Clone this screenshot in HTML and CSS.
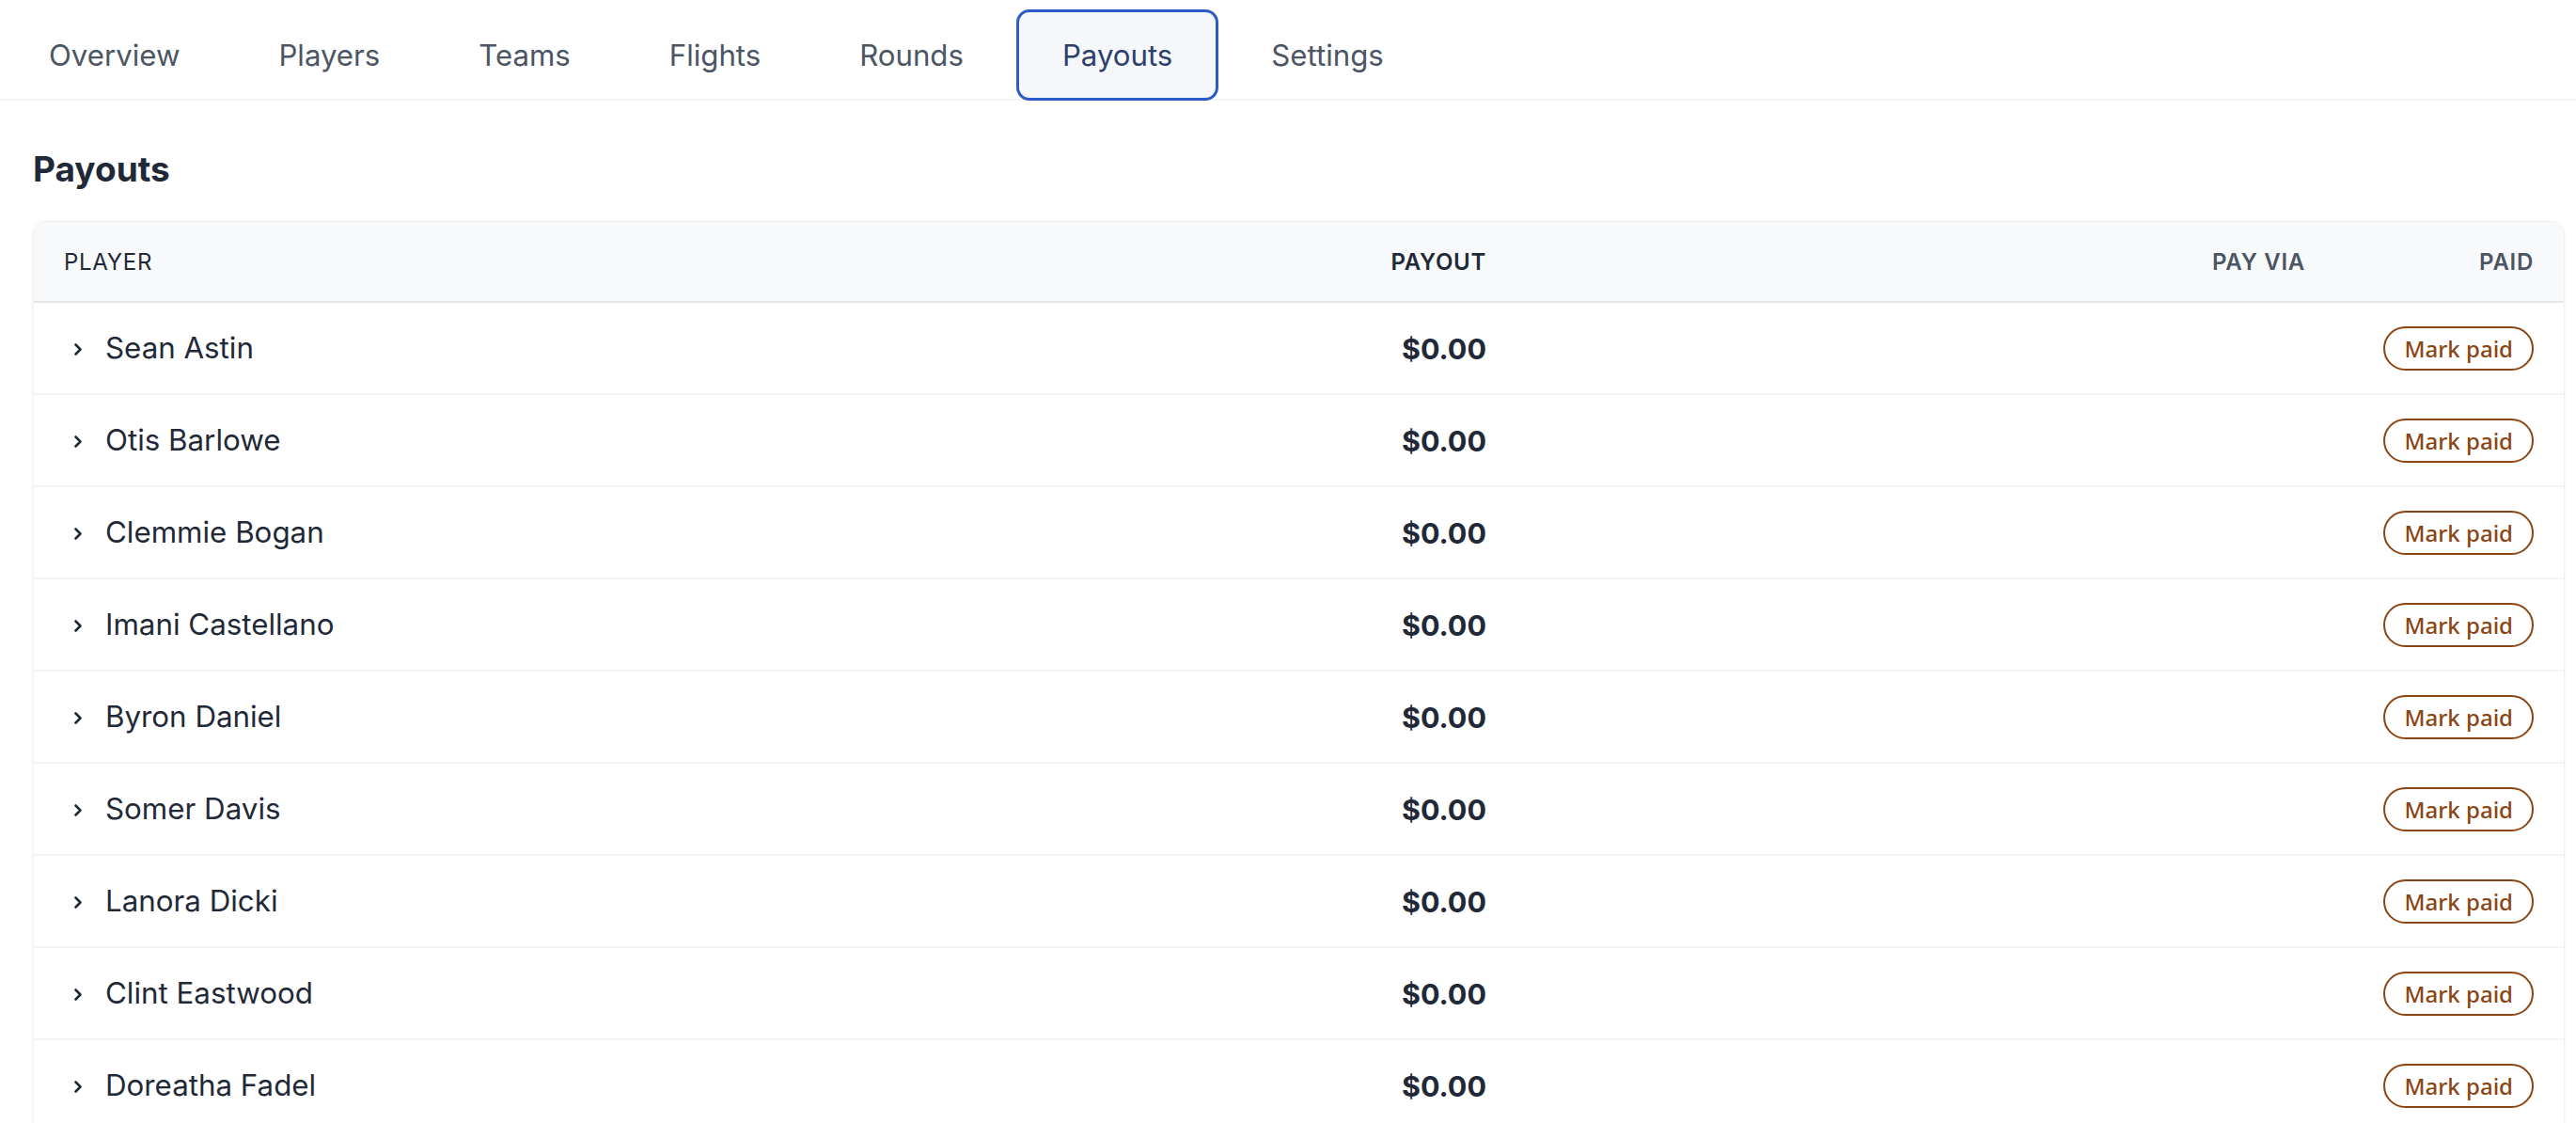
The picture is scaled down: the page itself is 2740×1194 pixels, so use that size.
FILE: index.html
```html
<!DOCTYPE html>
<html lang="en">
<head>
  <meta charset="UTF-8">
  <title>Payouts</title>
  <link rel="stylesheet" href="styles.css">
</head>
<body>
  <nav class="tabs">
    <a class="tab" href="#">Overview</a>
    <a class="tab" href="#">Players</a>
    <a class="tab" href="#">Teams</a>
    <a class="tab" href="#">Flights</a>
    <a class="tab" href="#">Rounds</a>
    <a class="tab active" href="#">Payouts</a>
    <a class="tab" href="#">Settings</a>
  </nav>

  <main class="page">
    <h1 class="page-title">Payouts</h1>

    <div class="card">
      <div class="row head">
        <div class="col-player">Player</div>
        <div class="col-payout">Payout</div>
        <div class="col-via">Pay via</div>
        <div class="col-paid">Paid</div>
      </div>

      <div class="row">
        <div class="col-player"><svg class="chev" viewBox="0 0 10 14"><polyline points="2.5,2 7.5,7 2.5,12"/></svg>Sean Astin</div>
        <div class="col-payout amount">$0.00</div>
        <div class="col-via"></div>
        <div class="col-paid"><button class="mark">Mark paid</button></div>
      </div>
      <div class="row">
        <div class="col-player"><svg class="chev" viewBox="0 0 10 14"><polyline points="2.5,2 7.5,7 2.5,12"/></svg>Otis Barlowe</div>
        <div class="col-payout amount">$0.00</div>
        <div class="col-via"></div>
        <div class="col-paid"><button class="mark">Mark paid</button></div>
      </div>
      <div class="row">
        <div class="col-player"><svg class="chev" viewBox="0 0 10 14"><polyline points="2.5,2 7.5,7 2.5,12"/></svg>Clemmie Bogan</div>
        <div class="col-payout amount">$0.00</div>
        <div class="col-via"></div>
        <div class="col-paid"><button class="mark">Mark paid</button></div>
      </div>
      <div class="row">
        <div class="col-player"><svg class="chev" viewBox="0 0 10 14"><polyline points="2.5,2 7.5,7 2.5,12"/></svg>Imani Castellano</div>
        <div class="col-payout amount">$0.00</div>
        <div class="col-via"></div>
        <div class="col-paid"><button class="mark">Mark paid</button></div>
      </div>
      <div class="row">
        <div class="col-player"><svg class="chev" viewBox="0 0 10 14"><polyline points="2.5,2 7.5,7 2.5,12"/></svg>Byron Daniel</div>
        <div class="col-payout amount">$0.00</div>
        <div class="col-via"></div>
        <div class="col-paid"><button class="mark">Mark paid</button></div>
      </div>
      <div class="row">
        <div class="col-player"><svg class="chev" viewBox="0 0 10 14"><polyline points="2.5,2 7.5,7 2.5,12"/></svg>Somer Davis</div>
        <div class="col-payout amount">$0.00</div>
        <div class="col-via"></div>
        <div class="col-paid"><button class="mark">Mark paid</button></div>
      </div>
      <div class="row">
        <div class="col-player"><svg class="chev" viewBox="0 0 10 14"><polyline points="2.5,2 7.5,7 2.5,12"/></svg>Lanora Dicki</div>
        <div class="col-payout amount">$0.00</div>
        <div class="col-via"></div>
        <div class="col-paid"><button class="mark">Mark paid</button></div>
      </div>
      <div class="row">
        <div class="col-player"><svg class="chev" viewBox="0 0 10 14"><polyline points="2.5,2 7.5,7 2.5,12"/></svg>Clint Eastwood</div>
        <div class="col-payout amount">$0.00</div>
        <div class="col-via"></div>
        <div class="col-paid"><button class="mark">Mark paid</button></div>
      </div>
      <div class="row">
        <div class="col-player"><svg class="chev" viewBox="0 0 10 14"><polyline points="2.5,2 7.5,7 2.5,12"/></svg>Doreatha Fadel</div>
        <div class="col-payout amount">$0.00</div>
        <div class="col-via"></div>
        <div class="col-paid"><button class="mark">Mark paid</button></div>
      </div>
    </div>
  </main>
</body>
</html>
```

FILE: styles.css
```css
body { margin: 0; background: #fff; font-family: Inter, "Noto Sans", sans-serif; color: #1f2937; }

/* tab strip */
.tabs { display: flex; gap: 7px; padding: 10px 0 0 3px; height: 95px; border-bottom: 2px solid #f3f4f6; }
.tab { display: flex; align-items: center; height: 97px; margin-bottom: -2px; padding: 0 46px; box-sizing: border-box;
  font-size: 31.2px; color: #4b5563; text-decoration: none; border: 3px solid transparent; border-radius: 14px; }
.tab.active { background: #f5f7fa; border-color: #2b5cc6; color: #2d3f6a; }

.page { padding: 0 12px 0 35px; }
.page-title { margin: 50px 0 32px; font-size: 37px; line-height: 46px; font-weight: 700; color: #1f2937; }

/* payouts table */
.card { background: #fff; border: 1px solid #f0f1f3; border-bottom: 0; border-radius: 14px 14px 0 0; box-shadow: 0 1px 4px rgba(0,0,0,0.04); overflow: hidden; }
.row { display: grid; grid-template-columns: 1fr 300px 871px 243px; align-items: center; height: 96px; padding: 0 32px; border-bottom: 2px solid #f3f4f6; }
.row.head { height: 84px; background: #f8f9fb; border-bottom: 2px solid #e5e7eb;
  font-size: 24px; text-transform: uppercase; letter-spacing: 0.03em; }
.head .col-player { color: #1f2937; }
.head .col-payout { font-weight: 600; color: #1f2937; }
.head .col-via, .head .col-paid { font-weight: 600; color: #4b5563; }
.col-payout, .col-via, .col-paid { text-align: right; }

.col-player { display: flex; align-items: center; font-size: 31.3px; }
.head .col-player { font-size: 24px; }
.chev { width: 10px; height: 15px; margin: 3px 24px 0 10px; fill: none; stroke: #1f2937; stroke-width: 2.6; stroke-linecap: round; stroke-linejoin: round; }
.amount { font-size: 30.5px; font-weight: 700; }

.mark { height: 47px; padding: 0 20px; background: #fff; border: 2px solid #8b4513; border-radius: 999px;
  font-family: "Noto Sans", sans-serif; font-size: 24px; font-weight: 500; color: #8b4513; }
```
